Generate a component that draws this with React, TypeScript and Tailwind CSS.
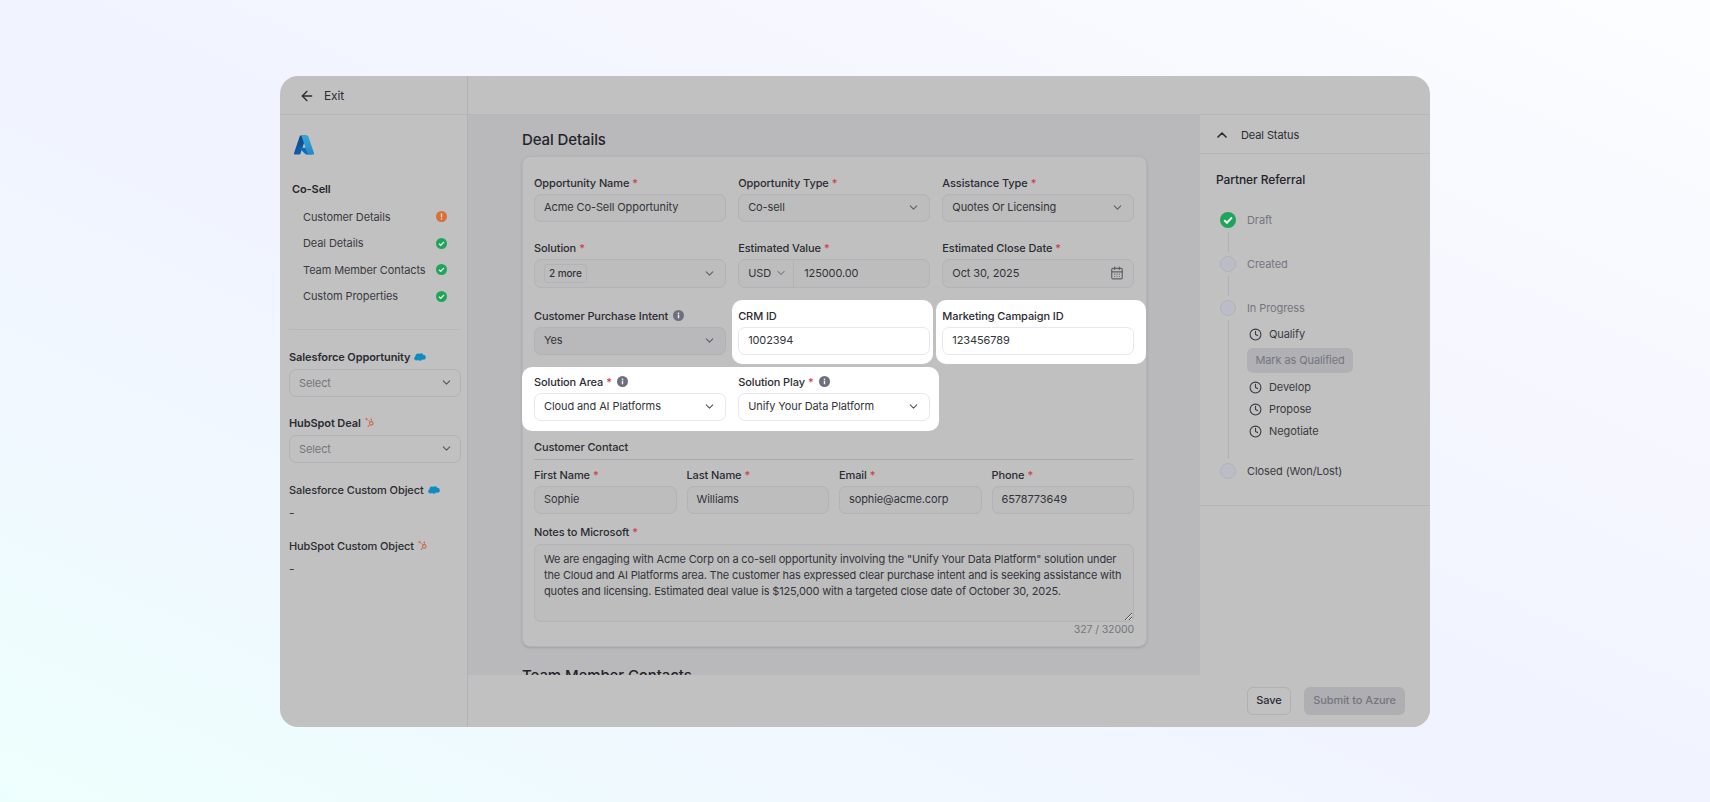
import React from "react";
import { ArrowLeft, CalendarDays, ChevronDown, ChevronUp, Clock } from "lucide-react";
import { FaHubspot } from "react-icons/fa";

function Req() {
  return <span className="ml-[3px] text-[#cf3a45]">*</span>;
}

function Info() {
  return (
    <svg width="11" height="11" viewBox="0 0 12 12" className="ml-[5px] shrink-0">
      <circle cx="6" cy="6" r="6" fill="#6c6f7c" />
      <rect x="5.2" y="5" width="1.6" height="4" fill="#fff" opacity="0.9" />
      <rect x="5.2" y="2.8" width="1.6" height="1.5" fill="#fff" opacity="0.9" />
    </svg>
  );
}

function Label({ text, req, info }: { text: string; req?: boolean; info?: boolean }) {
  return (
    <div className="flex h-[16px] items-center text-[11px] leading-[16px] font-medium text-[#2b2c32]">
      <span>{text}</span>
      {req && <Req />}
      {info && <Info />}
    </div>
  );
}

function Box({
  value,
  select,
  white,
  dark,
  h = "h-[28px]",
}: {
  value: string;
  select?: boolean;
  white?: boolean;
  dark?: boolean;
  h?: string;
}) {
  return (
    <div
      className={`mt-[3px] flex ${h} items-center justify-between rounded-[7px] border pl-[9px] pr-[9px] text-[11px] ${
        white
          ? "border-[#e6e7f1] bg-white text-[#33343a]"
          : dark
            ? "border-[#b1b1b6] bg-[#b9b9bb] text-[#33343a]"
            : "border-[#b2b2b7] bg-[#bdbdbe] text-[#33343a]"
      }`}
    >
      <span>{value}</span>
      {select && <ChevronDown size={13} className={white ? "text-[#55565e]" : "text-[#5f6068]"} />}
    </div>
  );
}

function AzureLogo() {
  return (
    <svg width="22" height="22" viewBox="0 0 96 96">
      <defs>
        <linearGradient id="az-a" x1="35" y1="8" x2="10" y2="90" gradientUnits="userSpaceOnUse">
          <stop offset="0" stopColor="#114a8b" />
          <stop offset="1" stopColor="#0a5fa8" />
        </linearGradient>
        <linearGradient id="az-c" x1="48" y1="8" x2="78" y2="88" gradientUnits="userSpaceOnUse">
          <stop offset="0" stopColor="#35a9d6" />
          <stop offset="1" stopColor="#2a86c8" />
        </linearGradient>
      </defs>
      <path
        d="M33.338 6.544h26.038l-27.03 80.087a4.152 4.152 0 0 1-3.933 2.824H8.149a4.145 4.145 0 0 1-3.928-5.47L29.404 9.368a4.152 4.152 0 0 1 3.934-2.825z"
        fill="url(#az-a)"
      />
      <path
        d="M71.175 60.261h-41.29a1.911 1.911 0 0 0-1.305 3.309l26.532 24.764a4.171 4.171 0 0 0 2.846 1.121h23.38z"
        fill="#0a6cbd"
      />
      <path
        d="M66.595 9.364a4.145 4.145 0 0 0-3.928-2.82H33.648a4.146 4.146 0 0 1 3.928 2.82l25.184 74.62a4.146 4.146 0 0 1-3.928 5.472h29.02a4.146 4.146 0 0 0 3.927-5.472z"
        fill="url(#az-c)"
      />
    </svg>
  );
}

function SfCloud() {
  return (
    <svg width="12" height="8" viewBox="0 0 24 16" className="ml-[4px] shrink-0">
      <g fill="#0f8cc2">
        <circle cx="8" cy="6" r="5" />
        <circle cx="14" cy="5" r="4.5" />
        <circle cx="18.5" cy="8.5" r="5" />
        <circle cx="12" cy="11" r="4.5" />
        <circle cx="5" cy="10.5" r="4.5" />
      </g>
    </svg>
  );
}

function StatusDot({ warn }: { warn?: boolean }) {
  if (warn) {
    return (
      <svg width="11" height="11" viewBox="0 0 12 12">
        <circle cx="6" cy="6" r="6" fill="#d9703a" />
        <rect x="5.3" y="2.6" width="1.4" height="4.2" fill="#f3d9c8" />
        <rect x="5.3" y="7.8" width="1.4" height="1.5" fill="#f3d9c8" />
      </svg>
    );
  }
  return (
    <svg width="11" height="11" viewBox="0 0 12 12">
      <circle cx="6" cy="6" r="6" fill="#1fa45a" />
      <path d="M3.2 6.2 5.2 8l3.6-3.8" fill="none" stroke="#e4efe8" strokeWidth="1.5" />
    </svg>
  );
}

function NavItem({ text, warn }: { text: string; warn?: boolean }) {
  return (
    <div className="flex h-[26.6px] items-center justify-between pl-[11px] pr-[14px] text-[11px] text-[#3a3b42]">
      <span>{text}</span>
      <StatusDot warn={warn} />
    </div>
  );
}

function SideSelect() {
  return (
    <div className="mt-[4px] flex h-[28px] items-center justify-between rounded-[7px] border border-[#b2b2b7] pl-[9px] pr-[7px] text-[11px] text-[#73747c]">
      <span>Select</span>
      <ChevronDown size={13} className="text-[#55565e]" />
    </div>
  );
}

function Circle() {
  return <div className="h-[16px] w-[16px] shrink-0 rounded-full border border-[#b2b3b9] bg-[#bbbcc5]" />;
}

function SubStep({ text }: { text: string }) {
  return (
    <div className="flex h-[16px] items-center gap-[7px] text-[11px] text-[#3a3b42]">
      <Clock size={13} className="text-[#3a3b42]" />
      <span>{text}</span>
    </div>
  );
}

export default function App() {
  return (
    <div className="flex h-[802px] w-full items-center justify-center bg-[linear-gradient(to_bottom_left,#fcfdff_0%,#f1f3ff_50%,#f1f7ff_70%,#edfffd_100%)] font-['Inter',sans-serif] tracking-[-0.1px]">
      <div className="flex h-[651px] w-[1150px] overflow-hidden rounded-[18px] bg-[#c1c1c1]">
        {/* sidebar */}
        <div className="flex w-[188px] shrink-0 flex-col border-r border-[#b2b2b8]">
          <div className="flex h-[39px] shrink-0 items-center gap-[9px] border-b border-[#b5b5ba] pl-[19px] pt-[2px] text-[12px] text-[#2b2c32]">
            <ArrowLeft size={16} />
            <span>Exit</span>
          </div>
          <div className="flex flex-col pl-[9px] pr-[6px]">
            <div className="ml-[4px] mt-[19px] h-[22px]">
              <AzureLogo />
            </div>
            <div className="ml-[3px] mt-[26px] flex h-[16px] items-center text-[11px] font-semibold text-[#26272c]">Co-Sell</div>
            <div className="mt-[6px] ml-[3px]">
              <NavItem text="Customer Details" warn />
              <NavItem text="Deal Details" />
              <NavItem text="Team Member Contacts" />
              <NavItem text="Custom Properties" />
            </div>
            <div className="mt-[19px] h-px bg-[#b6b6bb]" />
            <div className="mt-[19px] flex h-[16px] items-center text-[11px] font-semibold text-[#2b2c32]">
              Salesforce Opportunity <SfCloud />
            </div>
            <SideSelect />
            <div className="mt-[18px] flex h-[16px] items-center text-[11px] font-semibold text-[#2b2c32]">
              HubSpot Deal <FaHubspot size={9} className="ml-[4px] text-[#c9694f]" />
            </div>
            <SideSelect />
            <div className="mt-[19px] flex h-[16px] items-center text-[11px] font-medium text-[#2b2c32]">
              Salesforce Custom Object <SfCloud />
            </div>
            <div className="mt-[6px] h-[16px] text-[12px] text-[#3a3b42]">-</div>
            <div className="mt-[18px] flex h-[16px] items-center text-[11px] font-medium text-[#2b2c32]">
              HubSpot Custom Object <FaHubspot size={9} className="ml-[4px] text-[#c9694f]" />
            </div>
            <div className="mt-[6px] h-[16px] text-[12px] text-[#3a3b42]">-</div>
          </div>
        </div>

        <div className="flex min-w-0 flex-1 flex-col">
          <div className="h-[39px] shrink-0 border-b border-[#b5b5ba]" />
          <div className="flex min-h-0 flex-1">
            {/* main column */}
            <div className="min-w-0 flex-1 overflow-hidden bg-[#b9b9bb] pl-[54px] pr-[53px] pt-[15px]">
              <h2 className="text-[15px] leading-[20px] font-medium text-[#232429]">Deal Details</h2>
              <div className="mt-[6px] rounded-[8px] border border-[#b4b4b8] bg-[#c0c0c0] pb-[9px] pl-[11px] pr-[12px] pt-[18px] shadow-sm">
                <div className="grid grid-cols-3 gap-x-[12.5px]">
                  <div>
                    <Label text="Opportunity Name" req />
                    <Box value="Acme Co-Sell Opportunity" />
                  </div>
                  <div>
                    <Label text="Opportunity Type" req />
                    <Box value="Co-sell" select />
                  </div>
                  <div>
                    <Label text="Assistance Type" req />
                    <Box value="Quotes Or Licensing" select />
                  </div>
                </div>

                <div className="mt-[18px] grid grid-cols-3 gap-x-[12.5px]">
                  <div>
                    <Label text="Solution" req />
                    <div className="mt-[3px] flex h-[29px] items-center justify-between rounded-[7px] border border-[#b2b2b7] bg-[#bdbdbe] pl-[9px] pr-[9px]">
                      <span className="rounded-[3px] border border-[#b2b2b7] px-[4px] py-px text-[10px] font-medium text-[#33343a]">2 more</span>
                      <ChevronDown size={13} className="text-[#5f6068]" />
                    </div>
                  </div>
                  <div>
                    <Label text="Estimated Value" req />
                    <div className="mt-[3px] flex h-[29px] items-center rounded-[7px] border border-[#b2b2b7] bg-[#bdbdbe] text-[11px] text-[#33343a]">
                      <div className="flex h-full w-[55px] shrink-0 items-center gap-[4px] border-r border-[#b2b2b7] pl-[9px]">
                        <span>USD</span>
                        <ChevronDown size={12} className="text-[#5f6068]" />
                      </div>
                      <span className="pl-[10px]">125000.00</span>
                    </div>
                  </div>
                  <div>
                    <Label text="Estimated Close Date" req />
                    <div className="mt-[3px] flex h-[29px] items-center justify-between rounded-[7px] border border-[#b2b2b7] bg-[#bdbdbe] pl-[9px] pr-[9px] text-[11px] text-[#33343a]">
                      <span>Oct 30, 2025</span>
                      <CalendarDays size={14} className="text-[#5f6068]" />
                    </div>
                  </div>
                </div>

                <div className="mt-[20px] grid grid-cols-3 gap-x-[12.5px]">
                  <div>
                    <Label text="Customer Purchase Intent" info />
                    <Box value="Yes" select dark />
                  </div>
                  <div className="relative -ml-[6px] -mr-[3px] -mt-[8px] -mb-[9px] rounded-[10px] bg-white pb-[9px] pl-[6px] pr-[3px] pt-[8px]">
                    <Label text="CRM ID" />
                    <Box value="1002394" white />
                  </div>
                  <div className="relative -ml-[6px] -mr-[12px] -mt-[8px] -mb-[9px] rounded-[10px] bg-white pb-[9px] pl-[6px] pr-[12px] pt-[8px]">
                    <Label text="Marketing Campaign ID" />
                    <Box value="123456789" white />
                  </div>
                </div>

                <div className="mt-[19px] grid grid-cols-3 gap-x-[12.5px]">
                  <div className="relative col-span-2 -mb-[10px] -ml-[12px] -mr-[9px] -mt-[7px] grid grid-cols-2 gap-x-[12.5px] rounded-[10px] bg-white pb-[10px] pl-[12px] pr-[9px] pt-[7px]">
                    <div>
                      <Label text="Solution Area" req info />
                      <Box value="Cloud and AI Platforms" select white />
                    </div>
                    <div>
                      <Label text="Solution Play" req info />
                      <Box value="Unify Your Data Platform" select white />
                    </div>
                  </div>
                </div>

                <div className="mt-[18px] border-b border-[#a9a9ae] pb-[4px] text-[11px] leading-[16px] font-medium text-[#2b2c32]">Customer Contact</div>

                <div className="mt-[7px] grid grid-cols-4 gap-x-[10px]">
                  <div>
                    <Label text="First Name" req />
                    <Box value="Sophie" />
                  </div>
                  <div>
                    <Label text="Last Name" req />
                    <Box value="Williams" />
                  </div>
                  <div>
                    <Label text="Email" req />
                    <Box value="sophie@acme.corp" />
                  </div>
                  <div>
                    <Label text="Phone" req />
                    <Box value="6578773649" />
                  </div>
                </div>

                <div className="mt-[10px]">
                  <Label text="Notes to Microsoft" req />
                  <textarea
                    readOnly
                    className="mt-[4px] block h-[78px] w-full resize-y overflow-hidden rounded-[7px] border border-[#b2b2b7] bg-[#bdbdbe] pb-[6px] pl-[9px] pr-[3px] pt-[6px] text-[11px] leading-[16.3px] tracking-[-0.16px] text-[#33343a] outline-none"
                    defaultValue={
                      'We are engaging with Acme Corp on a co-sell opportunity involving the "Unify Your Data Platform" solution under the Cloud and AI Platforms area. The customer has expressed clear purchase intent and is seeking assistance with quotes and licensing. Estimated deal value is $125,000 with a targeted close date of October 30, 2025.'
                    }
                  />
                  <div className="mt-[1px] text-right text-[10.5px] leading-[14px] text-[#75767c]">327 / 32000</div>
                </div>
              </div>
              <h2 className="mt-[19px] text-[15px] leading-[20px] font-medium text-[#232429]">Team Member Contacts</h2>
            </div>

            {/* deal status */}
            <div className="w-[230px] shrink-0">
              <div className="border-b border-[#b3b3b8] pb-[26px]">
                <div className="flex h-[39px] items-center gap-[11px] border-b border-[#b5b5ba] pl-[14px] pt-[3px] text-[11px] text-[#2b2c32]">
                  <ChevronUp size={16} strokeWidth={2.5} />
                  <span>Deal Status</span>
                </div>
                <div className="mt-[18px] pl-[16px] text-[12px] leading-[16px] font-medium text-[#232429]">Partner Referral</div>
                <div className="mt-[24px] pl-[20px]">
                  <div className="flex h-[44px] gap-[11px]">
                    <div className="flex w-[16px] flex-col items-center">
                      <svg width="16" height="16" viewBox="0 0 16 16" className="shrink-0">
                        <circle cx="8" cy="8" r="8" fill="#1fa45a" />
                        <path d="M4.2 8.3 7 10.8l5-5.4" fill="none" stroke="#eaf3ed" strokeWidth="2" />
                      </svg>
                      <div className="my-[4px] w-px flex-1 bg-[#b0b0b5]" />
                    </div>
                    <span className="text-[11px] leading-[16px] text-[#75767e]">Draft</span>
                  </div>
                  <div className="flex h-[44px] gap-[11px]">
                    <div className="flex w-[16px] flex-col items-center">
                      <Circle />
                      <div className="my-[4px] w-px flex-1 bg-[#b0b0b5]" />
                    </div>
                    <span className="text-[11px] leading-[16px] text-[#75767e]">Created</span>
                  </div>
                  <div className="flex h-[163px] gap-[11px]">
                    <div className="flex w-[16px] flex-col items-center">
                      <Circle />
                      <div className="my-[4px] w-px flex-1 bg-[#b0b0b5]" />
                    </div>
                    <div>
                      <div className="text-[11px] leading-[16px] text-[#75767e]">In Progress</div>
                      <div className="mt-[11px] pl-[2px]">
                        <SubStep text="Qualify" />
                      </div>
                      <div className="mt-[5px] flex h-[25px] w-[106px] items-center justify-center rounded-[6px] bg-[#b0b0b5] text-[11px] text-[#75767e]">
                        Mark as Qualified
                      </div>
                      <div className="mt-[7px] flex flex-col gap-[6px] pl-[2px]">
                        <SubStep text="Develop" />
                        <SubStep text="Propose" />
                        <SubStep text="Negotiate" />
                      </div>
                    </div>
                  </div>
                  <div className="flex gap-[11px]">
                    <Circle />
                    <span className="text-[11px] leading-[16px] text-[#3a3b42]">Closed (Won/Lost)</span>
                  </div>
                </div>
              </div>
            </div>
          </div>

          {/* footer */}
          <div className="flex h-[52px] shrink-0 items-center justify-end gap-[13px] bg-[#c1c1c1] pr-[25px]">
            <button className="flex h-[28px] w-[44px] items-center justify-center rounded-[6px] border border-[#b0b0b5] text-[11px] font-medium text-[#2b2c32]">Save</button>
            <button className="flex h-[28px] w-[101px] items-center justify-center rounded-[6px] bg-[#afafb3] text-[11px] font-medium text-[#75767e]">Submit to Azure</button>
          </div>
        </div>
      </div>
    </div>
  );
}
